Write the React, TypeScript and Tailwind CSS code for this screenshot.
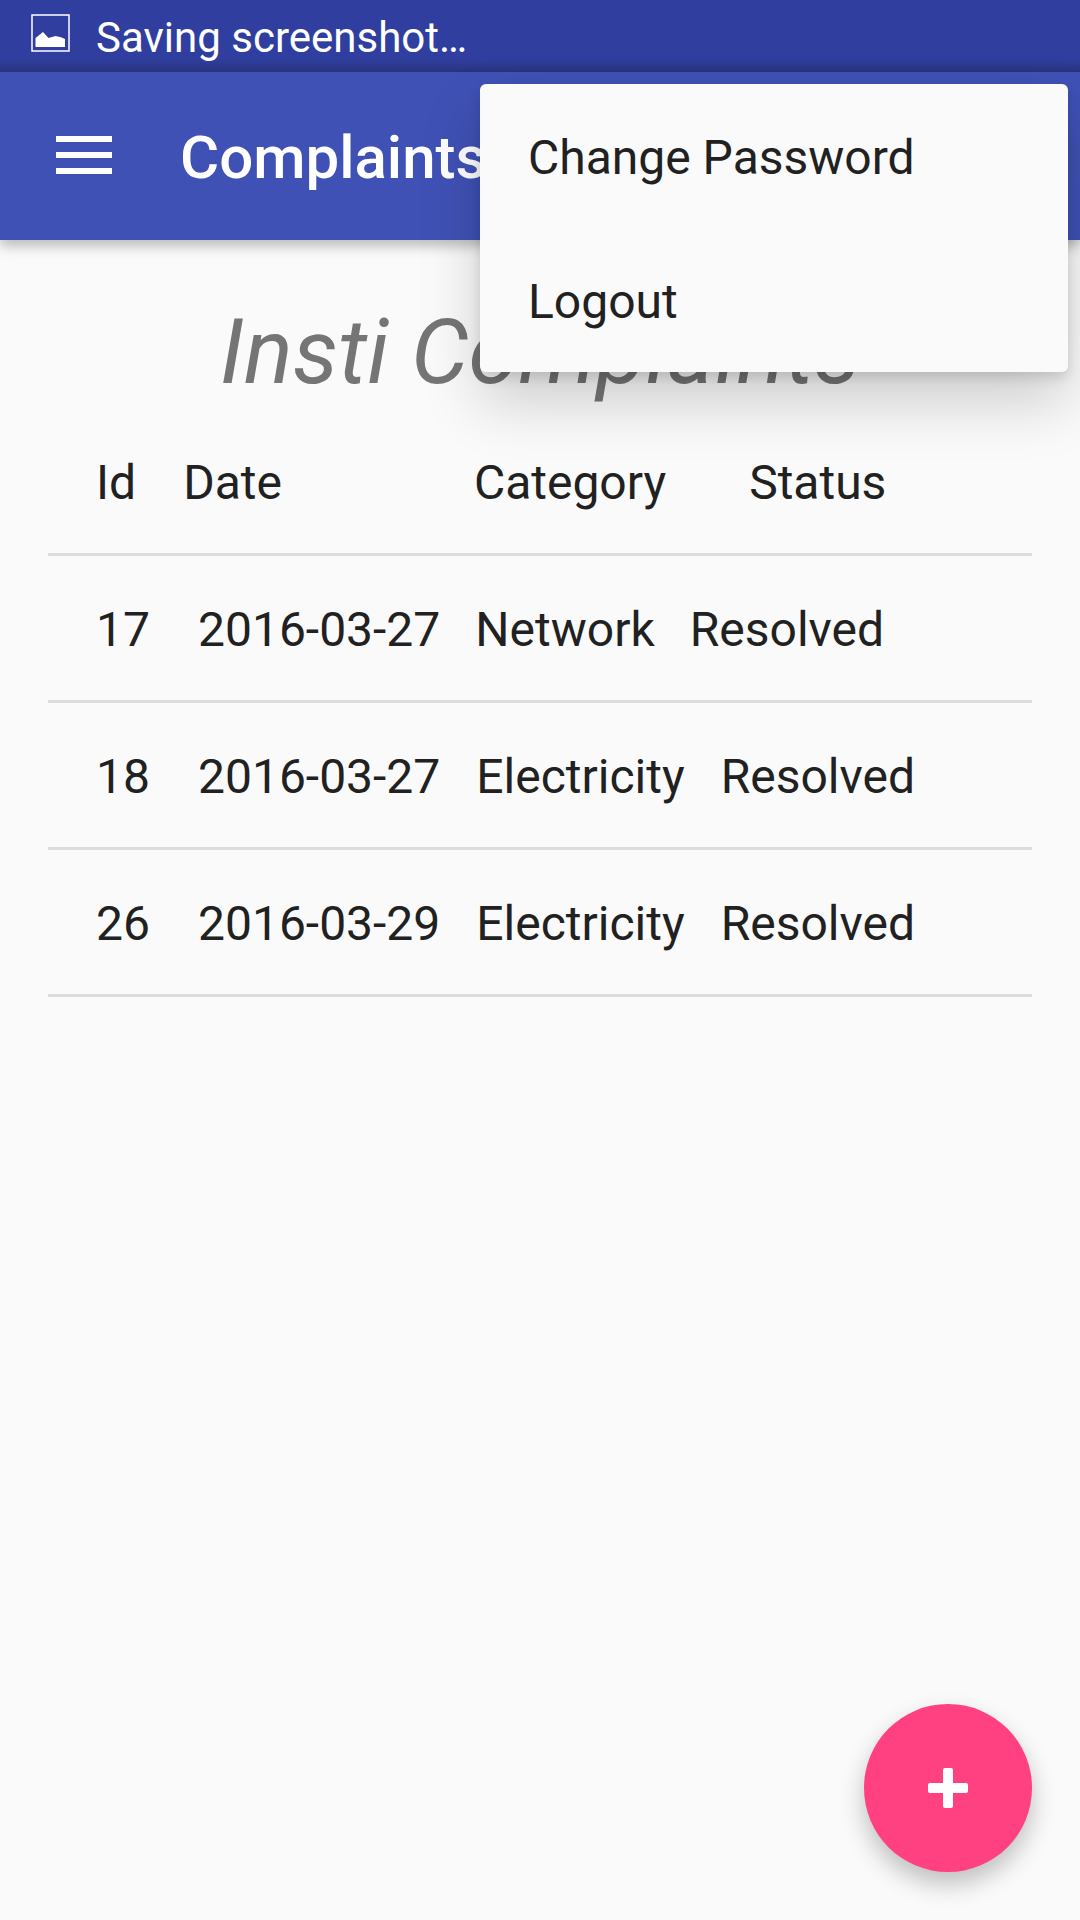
const rows = [
  { id: '17', date: '2016-03-27', category: 'Network', categoryGap: 'ml-[35px]', status: 'Resolved', statusGap: 'ml-[35px]' },
  { id: '18', date: '2016-03-27', category: 'Electricity', categoryGap: 'ml-[36px]', status: 'Resolved', statusGap: 'ml-[36px]' },
  { id: '26', date: '2016-03-29', category: 'Electricity', categoryGap: 'ml-[36px]', status: 'Resolved', statusGap: 'ml-[36px]' },
];

function ScreenshotIcon() {
  return (
    <svg className="w-[39px] h-[38px] shrink-0 mt-[14px]" viewBox="0 0 39 38" fill="none">
      <rect x="1" y="1" width="37" height="36" stroke="white" strokeWidth="1.500" />
      <path d="M4.500 33V24L12 18l5.500 6 7-2 5.500 1.300 4 1.700v8z" fill="white" />
    </svg>
  );
}

export default function App() {
  return (
    <div className="relative w-[1080px] h-[1920px] overflow-hidden bg-[#fafafa] font-['Roboto',sans-serif] text-[48px] text-[#212121]">
      {/* Status bar */}
      <div className="h-[72px] bg-gradient-to-b from-[#303f9f] from-80% to-[#2a3683] flex items-start pl-[31px] text-white">
        <ScreenshotIcon />
        <span className="ml-[26px] mt-[17px] text-[42px] leading-none">Saving screenshot…</span>
      </div>

      {/* Toolbar */}
      <div className="relative h-[168px] bg-[#3f51b5] flex items-center pl-[56px] shadow-[0_6px_12px_rgba(0,0,0,0.26)] text-white">
        <div className="flex flex-col gap-[10px] w-[56px] -mt-[2px]">
          <div className="h-[6px] bg-white" />
          <div className="h-[6px] bg-white" />
          <div className="h-[6px] bg-white" />
        </div>
        <span className="ml-[68px] mt-[3px] text-[60px] font-medium leading-none">Complaints</span>
      </div>

      {/* Page title */}
      <div className="h-[169px] flex items-center justify-center pt-[56px]">
        <h1 className="text-[91px] italic font-normal text-[#757575] leading-none">Insti Complaints</h1>
      </div>

      {/* Table */}
      <div className="mx-[48px]">
        <div className="h-[147px] border-b-[3px] border-[#dcdcdc] flex items-center pl-[48px] pt-[3px]">
          <span>Id</span>
          <span className="ml-[47px]">Date</span>
          <span className="ml-[192px]">Category</span>
          <span className="ml-[83px]">Status</span>
        </div>
        {rows.map((row) => (
          <div key={row.id} className="h-[147px] border-b-[3px] border-[#dcdcdc] flex items-center pl-[48px] pt-[3px]">
            <span>{row.id}</span>
            <span className="ml-[48px]">{row.date}</span>
            <span className={row.categoryGap}>{row.category}</span>
            <span className={row.statusGap}>{row.status}</span>
          </div>
        ))}
      </div>

      {/* Overflow menu */}
      <div className="absolute left-[480px] top-[84px] w-[588px] h-[288px] rounded-[6px] bg-[#fafafa] shadow-[0_30px_60px_rgba(0,0,0,0.18),0_6px_12px_rgba(0,0,0,0.12)]">
        <div className="h-[144px] flex items-center pl-[48px] pt-[3px]">Change Password</div>
        <div className="h-[144px] flex items-center pl-[48px] pt-[3px]">Logout</div>
      </div>

      {/* FAB */}
      <div className="absolute left-[864px] top-[1704px] w-[168px] h-[168px] rounded-full bg-[#ff4081] flex items-center justify-center shadow-[0_12px_24px_rgba(0,0,0,0.24)]">
        <svg className="w-[40px] h-[40px]" viewBox="0 0 40 40" fill="white">
          <rect x="15" y="0" width="10" height="40" rx="2" />
          <rect x="0" y="15" width="40" height="10" rx="2" />
        </svg>
      </div>
    </div>
  );
}
